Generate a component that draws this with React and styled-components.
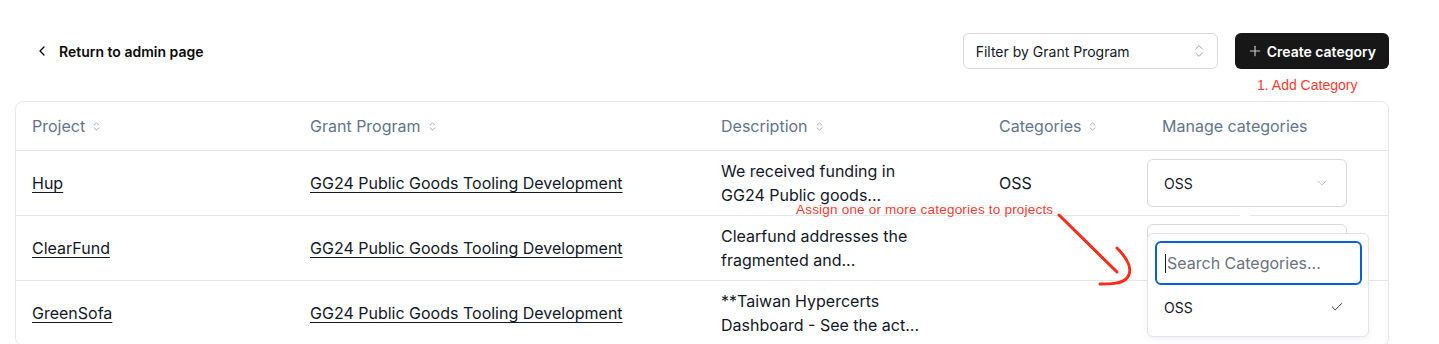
import styled, { createGlobalStyle } from "styled-components";
import { ChevronLeft, ChevronsUpDown, ChevronDown, Plus, Check } from "lucide-react";

const GlobalStyle = createGlobalStyle`
  html, body {
    margin: 0;
    padding: 0;
    background: #ffffff;
    overflow: hidden;
  }
  body {
    font-family: Inter, "Noto Sans", sans-serif;
    color: #111827;
    -webkit-font-smoothing: antialiased;
  }
`;

const Page = styled.div`
  position: relative;
  width: 1439px;
  height: 344px;
  box-sizing: border-box;
  padding: 33px 50px 0 15px;
  overflow: hidden;
`;

const TopBar = styled.div`
  display: flex;
  align-items: center;
  justify-content: space-between;
  height: 36px;
`;

const BackLink = styled.a`
  display: flex;
  align-items: center;
  gap: 9px;
  padding-left: 19px;
  font-size: 14px;
  font-weight: 600;
  color: #0a0a0a;
  text-decoration: none;
  cursor: pointer;
`;

const Actions = styled.div`
  display: flex;
  align-items: center;
  gap: 17px;
`;

const FilterSelect = styled.div`
  display: flex;
  align-items: center;
  justify-content: space-between;
  width: 255px;
  height: 36px;
  box-sizing: border-box;
  padding: 0 10px 0 12px;
  border: 1px solid #d6d9de;
  border-radius: 6px;
  font-size: 14px;
  color: #111827;
  svg {
    color: #9aa0a8;
  }
`;

const ButtonWrap = styled.div`
  position: relative;
`;

const PrimaryButton = styled.button`
  display: flex;
  align-items: center;
  gap: 4px;
  height: 36px;
  padding: 0 13px 0 12px;
  border: none;
  border-radius: 6px;
  background: #171717;
  color: #ffffff;
  font-family: Inter, sans-serif;
  font-size: 14px;
  font-weight: 600;
  svg {
    color: #c9c9c9;
  }
`;

const Note = styled.span`
  position: absolute;
  white-space: nowrap;
  color: #ff3b2f;
  font-family: "Liberation Sans", Arial, sans-serif;
  font-size: ${(p) => p.$size || 13}px;
  letter-spacing: ${(p) => p.$track || 0}px;
  left: ${(p) => p.$x}px;
  top: ${(p) => p.$y}px;
`;

const TableCard = styled.div`
  margin-top: 32px;
  border: 1px solid #e5e7eb;
  border-radius: 8px;
`;

const Row = styled.div`
  display: grid;
  grid-template-columns: 278px 411px 278px 163px 1fr;
  align-items: center;
  height: ${(p) => (p.$head ? 48 : 64)}px;
  border-top: ${(p) => (p.$head ? "none" : "1px solid #e5e7eb")};
`;

const HeadCell = styled.div`
  display: flex;
  align-items: center;
  gap: 6px;
  padding-left: 16px;
  font-size: 16px;
  color: #64748b;
  svg {
    color: #94a3b8;
  }
`;

const Cell = styled.div`
  padding-left: ${(p) => (p.$flush ? 1 : 16)}px;
  font-size: 16px;
  color: #111827;
`;

const LinkText = styled.a`
  color: #111827;
  text-decoration: underline;
  text-underline-offset: 3px;
  text-decoration-thickness: 1px;
`;

const Clamp = styled.div`
  width: 200px;
  line-height: 24px;
`;

const RowSelect = styled.div`
  display: flex;
  align-items: center;
  justify-content: space-between;
  width: 200px;
  height: 48px;
  box-sizing: border-box;
  padding: 0 16px 0 16px;
  border: 1px solid #d6d9de;
  border-radius: 6px;
  font-size: 14px;
  color: #111827;
  svg {
    color: #b6bcc6;
  }
`;

const Popover = styled.div`
  position: absolute;
  left: 1147px;
  top: 233px;
  width: 222px;
  height: 104px;
  box-sizing: border-box;
  padding: 7px 6px 0 7px;
  background: #ffffff;
  border: 1px solid #e2e5ea;
  border-radius: 6px;
  box-shadow: 0 2px 6px rgba(15, 23, 42, 0.06);
`;

const Notch = styled.div`
  position: absolute;
  left: 1241px;
  top: 211px;
  width: 8px;
  height: 8px;
  background: #ffffff;
  transform: rotate(45deg);
`;

const SearchInput = styled.div`
  display: flex;
  align-items: center;
  height: 44px;
  box-sizing: border-box;
  padding-left: 8px;
  border: 2px solid #0b5fdc;
  border-radius: 6px;
  font-size: 16px;
  color: #6b7280;
`;

const Caret = styled.span`
  display: inline-block;
  width: 1px;
  height: 19px;
  margin-right: 1px;
  background: #111827;
`;

const Option = styled.div`
  display: flex;
  align-items: center;
  justify-content: space-between;
  height: 44px;
  padding: 0 18px 0 9px;
  font-size: 14px;
  color: #111827;
`;

const Arrow = styled.svg`
  position: absolute;
  left: 1050px;
  top: 205px;
  overflow: visible;
`;

const rows = [
  {
    project: "Hup",
    program: "GG24 Public Goods Tooling Development",
    desc: "We received funding in GG24 Public goods...",
    categories: "OSS",
    selected: "OSS",
  },
  {
    project: "ClearFund",
    program: "GG24 Public Goods Tooling Development",
    desc: "Clearfund addresses the fragmented and...",
    categories: "",
    selected: "",
  },
  {
    project: "GreenSofa",
    program: "GG24 Public Goods Tooling Development",
    desc: "**Taiwan Hypercerts Dashboard - See the act...",
    categories: "",
    selected: null,
  },
];

function SortIcon() {
  return <ChevronsUpDown size={11} strokeWidth={2} />;
}

export default function App() {
  return (
    <>
      <GlobalStyle />
      <Page>
        <TopBar>
          <BackLink>
            <ChevronLeft size={16} strokeWidth={2} />
            Return to admin page
          </BackLink>
          <Actions>
            <FilterSelect>
              Filter by Grant Program
              <ChevronsUpDown size={16} strokeWidth={1.5} />
            </FilterSelect>
            <ButtonWrap>
              <PrimaryButton>
                <Plus size={16} strokeWidth={1.75} />
                Create category
              </PrimaryButton>
            </ButtonWrap>
          </Actions>
        </TopBar>

        <TableCard>
          <Row $head>
            <HeadCell>
              Project <SortIcon />
            </HeadCell>
            <HeadCell>
              Grant Program <SortIcon />
            </HeadCell>
            <HeadCell>
              Description <SortIcon />
            </HeadCell>
            <HeadCell>
              Categories <SortIcon />
            </HeadCell>
            <HeadCell>Manage categories</HeadCell>
          </Row>
          {rows.map((r) => (
            <Row key={r.project}>
              <Cell>
                <LinkText>{r.project}</LinkText>
              </Cell>
              <Cell>
                <LinkText>{r.program}</LinkText>
              </Cell>
              <Cell>
                <Clamp>{r.desc}</Clamp>
              </Cell>
              <Cell>{r.categories}</Cell>
              <Cell $flush>
                {r.selected !== null && (
                  <RowSelect>
                    {r.selected}
                    <ChevronDown size={16} strokeWidth={1.25} />
                  </RowSelect>
                )}
              </Cell>
            </Row>
          ))}
        </TableCard>

        <Note $x={1257} $y={77} $size={14}>
          1. Add Category
        </Note>
        <Note $x={796} $y={202} $size={13.5} $track={0.2}>
          Assign one or more categories to projects
        </Note>
        <Arrow width="90" height="90" viewBox="0 0 90 90">
          <path
            d="M9 10 L67 67"
            stroke="#ff2a1a"
            strokeWidth="3"
            strokeLinecap="round"
            fill="none"
          />
          <path
            d="M67 43 C78 54 84 66 76 74 C70 79 60 79 50 79"
            stroke="#ff2a1a"
            strokeWidth="3"
            strokeLinecap="round"
            fill="none"
          />
        </Arrow>

        <Notch />
        <Popover>
          <SearchInput>
            <Caret />
            Search Categories...
          </SearchInput>
          <Option>
            OSS
            <Check size={14} strokeWidth={1.5} />
          </Option>
        </Popover>
      </Page>
    </>
  );
}
